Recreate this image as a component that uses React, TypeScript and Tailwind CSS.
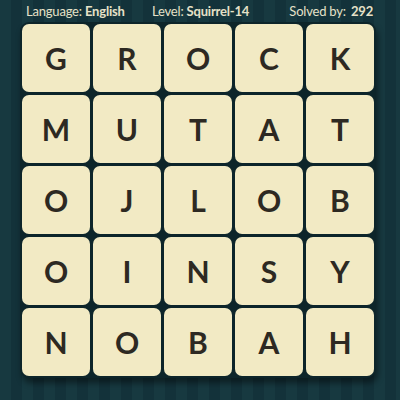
import React from 'react';

const ROWS = ['GROCK', 'MUTAT', 'OJLOB', 'OINSY', 'NOBAH'];

const Tile: React.FC<{ letter: string }> = ({ letter }) => (
  <div className="w-[68px] h-[68px] rounded-[7px] bg-[#f2eac4] flex items-center justify-center">
    <span className="text-[30px] font-bold text-[#2d2922] leading-none">{letter}</span>
  </div>
);

const App: React.FC = () => {
  return (
    <div
      className="w-[400px] h-[400px] overflow-hidden bg-[repeating-linear-gradient(90deg,#173940_0px,#173940_11px,#13323a_11px,#13323a_22px)] flex flex-col items-center"
      style={{ fontFamily: 'Lato, "Open Sans", sans-serif' }}
    >
      <div className="w-full flex items-center pl-[26px] pr-[27px] pt-[3px] h-[21px] text-[13px] text-[#e6e1c8] tracking-[-0.2px]">
        <div className="w-[126px]">
          Language: <span className="font-bold">English</span>
        </div>
        <div>
          Level: <span className="font-bold">Squirrel-14</span>
        </div>
        <div className="ml-auto">
          Solved by: <span className="font-bold ml-[2px]">292</span>
        </div>
      </div>
      <div className="mt-[1px] ml-[-4px] p-[2px] rounded-[9px] bg-[#0d252a] shadow-[2px_5px_6px_rgba(0,0,0,0.45)] grid grid-cols-5 gap-[3px]">
        {ROWS.map((row, r) =>
          row.split('').map((ch, c) => <Tile key={`${r}-${c}`} letter={ch} />)
        )}
      </div>
    </div>
  );
};

export default App;
